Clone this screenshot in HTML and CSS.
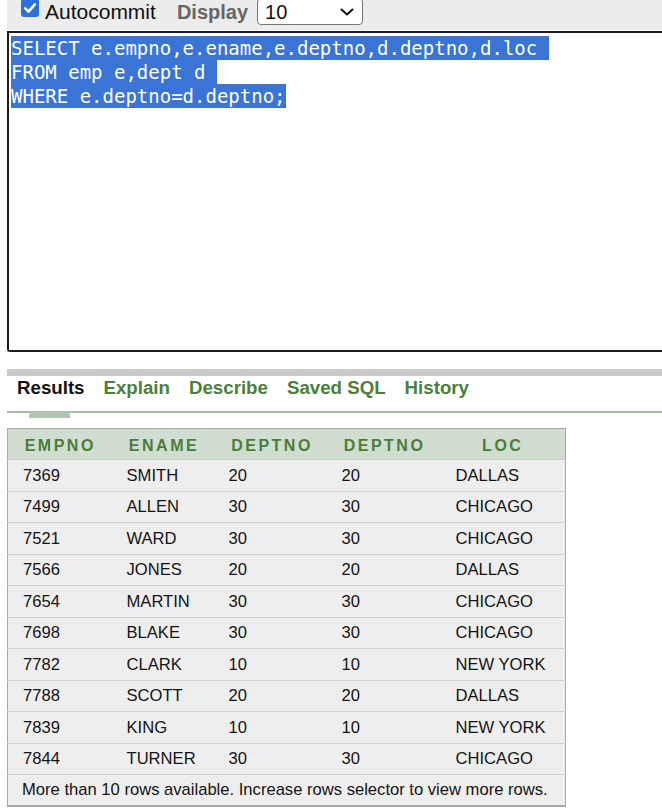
FILE: index.html
```html
<!DOCTYPE html>
<html>
<head>
<meta charset="utf-8">
<link rel="stylesheet" href="styles.css">
</head>
<body>
<div class="page">
  <div class="toolbar">
    <span class="check"><svg viewBox="0 0 18 18" width="18" height="18"><path d="M4.2 9.4 L7.6 12.6 L13.8 5.4" fill="none" stroke="#fff" stroke-width="2.6" stroke-linecap="round" stroke-linejoin="round"/></svg></span>
    <span class="label">Autocommit</span>
    <span class="display">Display</span>
    <div class="select"><span>10</span><svg viewBox="0 0 14 8" width="14" height="8"><path d="M1.5 1.5 L7 6.5 L12.5 1.5" fill="none" stroke="#111" stroke-width="2" stroke-linecap="round" stroke-linejoin="round"/></svg></div>
  </div>
  <div class="editor"><div class="line"><span class="sel">SELECT e.empno,e.ename,e.deptno,d.deptno,d.loc </span></div><div class="line"><span class="sel">FROM emp e,dept d </span></div><div class="line"><span class="sel">WHERE e.deptno=d.deptno;</span></div></div>
  <div class="band"></div>
  <nav class="tabs">
    <span class="tab active">Results</span>
    <span class="tab">Explain</span>
    <span class="tab">Describe</span>
    <span class="tab">Saved SQL</span>
    <span class="tab">History</span>
  </nav>
  <table class="results">
    <colgroup><col class="c1"><col class="c2"><col class="c3"><col class="c4"><col class="c5"></colgroup>
    <thead>
      <tr><th>EMPNO</th><th>ENAME</th><th>DEPTNO</th><th>DEPTNO</th><th>LOC</th></tr>
    </thead>
    <tbody>
      <tr><td>7369</td><td>SMITH</td><td>20</td><td>20</td><td>DALLAS</td></tr>
      <tr><td>7499</td><td>ALLEN</td><td>30</td><td>30</td><td>CHICAGO</td></tr>
      <tr><td>7521</td><td>WARD</td><td>30</td><td>30</td><td>CHICAGO</td></tr>
      <tr><td>7566</td><td>JONES</td><td>20</td><td>20</td><td>DALLAS</td></tr>
      <tr><td>7654</td><td>MARTIN</td><td>30</td><td>30</td><td>CHICAGO</td></tr>
      <tr><td>7698</td><td>BLAKE</td><td>30</td><td>30</td><td>CHICAGO</td></tr>
      <tr><td>7782</td><td>CLARK</td><td>10</td><td>10</td><td>NEW YORK</td></tr>
      <tr><td>7788</td><td>SCOTT</td><td>20</td><td>20</td><td>DALLAS</td></tr>
      <tr><td>7839</td><td>KING</td><td>10</td><td>10</td><td>NEW YORK</td></tr>
      <tr><td>7844</td><td>TURNER</td><td>30</td><td>30</td><td>CHICAGO</td></tr>
      <tr class="foot"><td colspan="5">More than 10 rows available. Increase rows selector to view more rows.</td></tr>
    </tbody>
  </table>
</div>
</body>
</html>
```

FILE: styles.css
```css
* { box-sizing: border-box; }
html, body { margin: 0; padding: 0; background: #fff; }
body { font-family: "Liberation Sans", Arial, sans-serif; color: #111; overflow: hidden; }
.page { padding-left: 7px; width: 662px; }

.toolbar {
  height: 30px;
  background: #ececec;
  display: flex;
  align-items: flex-start;
}
.check {
  width: 18px; height: 18px;
  margin-left: 14px; margin-top: -1px;
  background: #2a6fdb;
  border-radius: 3px;
  display: flex;
}
.label {
  font-size: 21px; line-height: 24px;
  margin-left: 6px;
  color: #111;
}
.display {
  font-size: 20px; line-height: 24px; font-weight: bold;
  color: #666;
  margin-left: 21px;
}
.select {
  margin-left: 9px; margin-top: -2px;
  width: 106px; height: 27px;
  border: 1px solid #767676;
  border-radius: 4px;
  background: #fff;
  display: flex; align-items: center; justify-content: space-between;
  padding: 0 8px 0 7px;
  font-size: 20px;
}
.select span { line-height: 24px; }

.editor {
  margin-top: 1px;
  height: 321px;
  border: 2px solid #1c1c1c;
  border-right: none;
  border-radius: 0 0 0 3px;
  padding: 3px 2px;
  font-family: "DejaVu Sans Mono", monospace;
  font-size: 19px;
  line-height: 24px;
  white-space: pre;
}
.line { height: 24px; }
.sel { background: #3a74d6; color: #fff; display: inline-block; height: 24px; }

.band { margin-top: 17px; height: 7px; background: #cbcbcb; }

.tabs {
  display: flex;
  gap: 19px;
  height: 37px;
  padding: 1px 0 0 10px;
  border-bottom: 2px solid #a9bda9;
  position: relative;
}
.tab {
  font-size: 18.7px; line-height: 22px; font-weight: bold;
  color: #4b7f3b;
  position: relative;
}
.tab.active { color: #111; }
.tab.active::after {
  content: "";
  position: absolute;
  left: 12px; width: 41px; bottom: -7px;
  height: 6px;
  background: #b2c5b2;
  border-radius: 4px 4px 0 0;
}

.results {
  margin-top: 15px;
  border-collapse: collapse;
  width: 558px;
  table-layout: fixed;
  border: 1px solid #a9a9a9;
  border-bottom-width: 2px;
  font-size: 16.6px;
  background: #eeeeee;
}
.c1 { width: 105px; } .c2 { width: 103px; } .c3 { width: 113px; } .c4 { width: 112px; } .c5 { width: 125px; }
.results th {
  background: #d1ddd1;
  color: #4a7d3b;
  font-size: 16px;
  letter-spacing: 2.5px;
  font-weight: bold;
  height: 31px;
  text-align: center;
  padding: 3px 0 0;
  border-bottom: 1px solid #c9c9c9;
}
.results td {
  height: 31.5px;
  padding: 1px 0 0 15px;
  border-top: 1px solid #d3d3d3;
  color: #141414;
  white-space: nowrap;
}
.results td:nth-child(3), .results td:nth-child(4) { padding-left: 13px; }
.results td:nth-child(2) { padding-left: 14px; }
.results .foot td { padding-left: 14px; height: 31px; }
```
